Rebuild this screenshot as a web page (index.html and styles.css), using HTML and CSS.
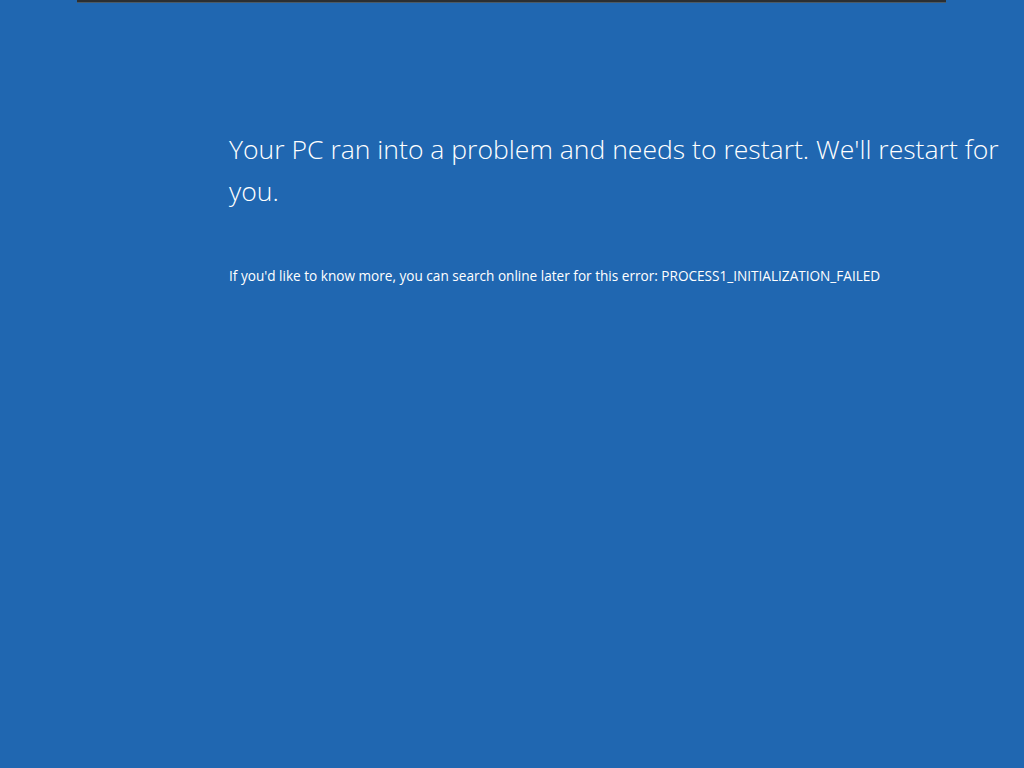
FILE: index.html
```html
<!DOCTYPE html>
<html>
<head>
<meta charset="utf-8">
<link rel="stylesheet" href="styles.css">
</head>
<body>
<div class="topbar"></div>
<main class="content">
  <p class="headline">Your PC ran into a problem and needs to restart. We'll restart for you.</p>
  <p class="detail">If you'd like to know more, you can search online later for this error: PROCESS1_INITIALIZATION_FAILED</p>
</main>
</body>
</html>
```
FILE: styles.css
```css
html, body {
  margin: 0;
  padding: 0;
  height: 100%;
}
body {
  background: #2067b1;
  color: #ffffff;
  font-family: "Open Sans", "Noto Sans", sans-serif;
  overflow: hidden;
}
.topbar {
  margin-left: 77px;
  width: 869px;
  height: 2px;
  background: #2b2f33;
  border-bottom: 1px solid #4a5a66;
}
.content {
  padding-left: 229px;
  padding-right: 10px;
  padding-top: 125px;
}
.headline {
  margin: 0;
  font-size: 26.55px;
  font-weight: 300;
  line-height: 42px;
}
.detail {
  margin: 54px 0 0 0;
  font-size: 13.6px;
  font-weight: 400;
  line-height: 19px;
}
```
